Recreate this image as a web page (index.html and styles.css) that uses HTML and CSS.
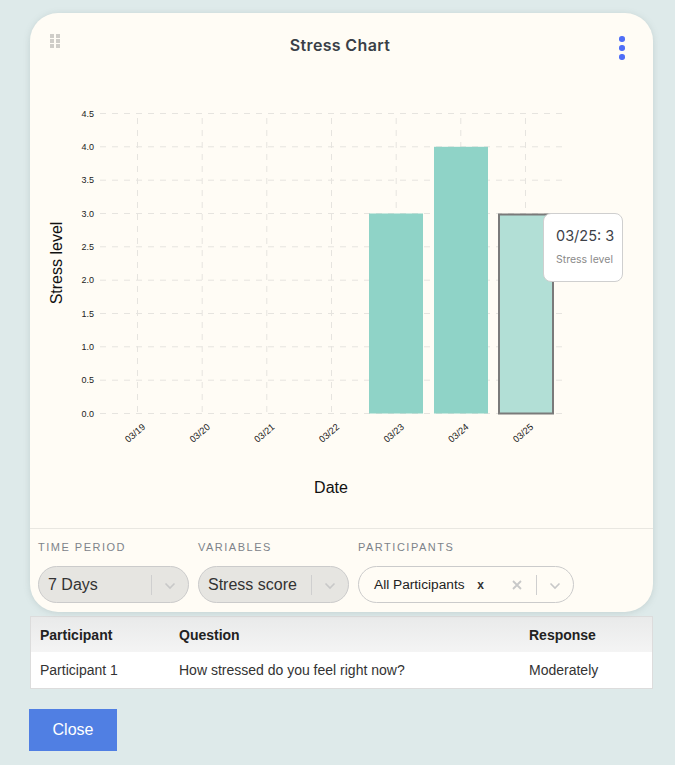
FILE: index.html
```html
<!DOCTYPE html>
<html>
<head>
<meta charset="utf-8">
<link rel="stylesheet" href="styles.css">
</head>
<body>
<div class="page">
  <div class="card">
    <div class="card-header">
      <div class="side left">
        <div class="drag">
          <span></span><span></span><span></span><span></span><span></span><span></span>
        </div>
      </div>
      <div class="title">Stress Chart</div>
      <div class="side right">
        <div class="kebab"><span></span><span></span><span></span></div>
      </div>
    </div>
    <svg class="chart" width="623" height="453" viewBox="0 0 623 453" xmlns="http://www.w3.org/2000/svg">
      <g stroke="#e6e4df" stroke-width="1" stroke-dasharray="6 6" fill="none">
        <line x1="70" y1="38.5" x2="532" y2="38.5"/>
        <line x1="70" y1="71.8" x2="532" y2="71.8"/>
        <line x1="70" y1="105.2" x2="532" y2="105.2"/>
        <line x1="70" y1="138.5" x2="532" y2="138.5"/>
        <line x1="70" y1="171.8" x2="532" y2="171.8"/>
        <line x1="70" y1="205.2" x2="532" y2="205.2"/>
        <line x1="70" y1="238.5" x2="532" y2="238.5"/>
        <line x1="70" y1="271.8" x2="532" y2="271.8"/>
        <line x1="70" y1="305.2" x2="532" y2="305.2"/>
        <line x1="70" y1="338.5" x2="532" y2="338.5"/>
        <line x1="107.5" y1="43" x2="107.5" y2="338"/>
        <line x1="172.2" y1="43" x2="172.2" y2="338"/>
        <line x1="236.8" y1="43" x2="236.8" y2="338"/>
        <line x1="301.5" y1="43" x2="301.5" y2="338"/>
        <line x1="366.2" y1="43" x2="366.2" y2="338"/>
        <line x1="430.8" y1="43" x2="430.8" y2="338"/>
        <line x1="495.5" y1="43" x2="495.5" y2="338"/>
      </g>
      <g font-family="Liberation Sans, Arial, sans-serif" font-size="9" fill="#222" text-anchor="end">
        <text x="64" y="41.5">4.5</text>
        <text x="64" y="74.8">4.0</text>
        <text x="64" y="108.2">3.5</text>
        <text x="64" y="141.5">3.0</text>
        <text x="64" y="174.8">2.5</text>
        <text x="64" y="208.2">2.0</text>
        <text x="64" y="241.5">1.5</text>
        <text x="64" y="274.8">1.0</text>
        <text x="64" y="308.2">0.5</text>
        <text x="64" y="341.5">0.0</text>
      </g>
      <rect x="339" y="138.5" width="54" height="200" fill="#8fd3c7"/>
      <rect x="404" y="71.8" width="54" height="266.7" fill="#8fd3c7"/>
      <rect x="469" y="139.5" width="54" height="199" fill="#b2dfd6" stroke="#7a7a7a" stroke-width="2"/>
      <g font-family="Liberation Sans, Arial, sans-serif" font-size="9.3" fill="#222" text-anchor="end">
        <text transform="translate(116 353) rotate(-40)">03/19</text>
        <text transform="translate(180.7 353) rotate(-40)">03/20</text>
        <text transform="translate(245.3 353) rotate(-40)">03/21</text>
        <text transform="translate(310 353) rotate(-40)">03/22</text>
        <text transform="translate(374.7 353) rotate(-40)">03/23</text>
        <text transform="translate(439.3 353) rotate(-40)">03/24</text>
        <text transform="translate(504 353) rotate(-40)">03/25</text>
      </g>
      <text x="301" y="418" font-family="Liberation Sans, Arial, sans-serif" font-size="16" fill="#111" text-anchor="middle">Date</text>
      <text transform="translate(32 188) rotate(-90)" font-family="Liberation Sans, Arial, sans-serif" font-size="16" fill="#111" text-anchor="middle">Stress level</text>
    </svg>
    <div class="tooltip">
      <div class="tt-value">03/25: 3</div>
      <div class="tt-label">Stress level</div>
    </div>
    <div class="filters">
      <div class="filter f-time">
        <div class="filter-label">TIME PERIOD</div>
        <div class="select grey">
          <span class="select-value">7 Days</span>
          <span class="sep"></span>
          <span class="chev"><svg width="12" height="8" viewBox="0 0 12 8"><path d="M1.5 1.5 L6 6 L10.5 1.5" fill="none" stroke="#c8c8c8" stroke-width="1.6"/></svg></span>
        </div>
      </div>
      <div class="filter f-var">
        <div class="filter-label">VARIABLES</div>
        <div class="select grey">
          <span class="select-value">Stress score</span>
          <span class="sep"></span>
          <span class="chev"><svg width="12" height="8" viewBox="0 0 12 8"><path d="M1.5 1.5 L6 6 L10.5 1.5" fill="none" stroke="#c8c8c8" stroke-width="1.6"/></svg></span>
        </div>
      </div>
      <div class="filter f-part">
        <div class="filter-label">PARTICIPANTS</div>
        <div class="select light">
          <span class="chip">All Participants <span class="chip-x">x</span></span>
          <span class="clear"><svg width="10" height="10" viewBox="0 0 10 10"><path d="M1 1 L9 9 M9 1 L1 9" fill="none" stroke="#c8c8c8" stroke-width="1.8"/></svg></span>
          <span class="sep"></span>
          <span class="chev"><svg width="12" height="8" viewBox="0 0 12 8"><path d="M1.5 1.5 L6 6 L10.5 1.5" fill="none" stroke="#c8c8c8" stroke-width="1.6"/></svg></span>
        </div>
      </div>
    </div>
  </div>
  <div class="table">
    <div class="row head">
      <div class="c1">Participant</div>
      <div class="c2">Question</div>
      <div class="c3">Response</div>
    </div>
    <div class="row body">
      <div class="c1">Participant 1</div>
      <div class="c2">How stressed do you feel right now?</div>
      <div class="c3">Moderately</div>
    </div>
  </div>
  <button class="close">Close</button>
</div>
</body>
</html>
```

FILE: styles.css
```css
* { box-sizing: border-box; }
html, body { margin: 0; padding: 0; }
body {
  background: #deeaea;
  width: 675px;
  height: 765px;
  overflow: hidden;
  font-family: "Liberation Sans", Arial, sans-serif;
}
.page {
  padding: 13px 22px 0 30px;
}
.card {
  position: relative;
  width: 623px;
  height: 599px;
  background: #fffcf5;
  border-radius: 28px;
  box-shadow: 0 1px 6px rgba(120, 140, 140, 0.25);
  display: flex;
  flex-direction: column;
}
.card-header {
  height: 62px;
  display: flex;
  align-items: flex-start;
  justify-content: space-between;
  padding: 21px 28px 0 20px;
}
.side { width: 40px; display: flex; }
.side.right { justify-content: flex-end; }
.drag {
  display: grid;
  grid-template-columns: 4px 4px;
  grid-auto-rows: 4px;
  gap: 1px 2px;
}
.drag span { background: #cfcdc8; display: block; }
.title {
  font-family: Inter, "Open Sans", sans-serif;
  font-weight: 600;
  font-size: 16px;
  letter-spacing: 0.35px;
  color: #3a3f47;
  margin-top: 1px;
  margin-left: 5px;
}
.kebab {
  display: flex;
  flex-direction: column;
  gap: 3.5px;
  margin-top: 2px;
}
.kebab span {
  width: 5.5px;
  height: 5.5px;
  border-radius: 50%;
  background: #4f6ef7;
  display: block;
}
.chart { display: block; flex: none; }
.tooltip {
  position: absolute;
  left: 513px;
  top: 200px;
  width: 80px;
  height: 69px;
  background: #fff;
  border: 1px solid #cfcfcf;
  border-radius: 8px;
  padding: 12px 0 0 12px;
  font-family: Inter, "Open Sans", sans-serif;
}
.tt-value { font-size: 14.5px; color: #3d4148; line-height: 20px; }
.tt-label { font-size: 10.5px; color: #8a8a8a; margin-top: 7px; line-height: 13px; }
.filters {
  border-top: 1px solid #e9e7e1;
  display: flex;
  gap: 9px;
  padding: 11px 0 0 8px;
}
.filter-label {
  font-size: 11px;
  letter-spacing: 1.5px;
  color: #7d838a;
  line-height: 14px;
  margin-bottom: 12px;
}
.f-time .select, .f-var .select { width: 151px; }
.f-part .select { width: 216px; }
.select {
  height: 37px;
  border-radius: 19px;
  border: 1px solid #cbcbcb;
  display: flex;
  align-items: center;
}
.select.grey { background: #e6e5e1; }
.select.light { background: #fffcf5; }
.select-value {
  flex: 1;
  padding-left: 9px;
  font-size: 16px;
  color: #333;
}
.sep {
  width: 1px;
  height: 20px;
  background: #cfcfcf;
}
.chev {
  width: 36px;
  display: flex;
  justify-content: center;
  align-items: center;
  padding-top: 2px;
}
.chip {
  flex: 1;
  padding-left: 15px;
  font-size: 13.7px;
  color: #222;
}
.chip-x { font-weight: bold; font-size: 12px; margin-left: 9px; color: #333; }
.clear {
  width: 38px;
  display: flex;
  justify-content: center;
  align-items: center;
}
.table {
  margin-top: 4px;
  width: 623px;
  border: 1px solid #dcdcdc;
  background: #fff;
}
.row {
  display: grid;
  grid-template-columns: 139px 350px 1fr;
  height: 36px;
  align-items: center;
  font-size: 14px;
  color: #333;
}
.row.head {
  background: linear-gradient(#e9eaea, #f4f4f4);
  font-weight: bold;
  color: #222;
  height: 35px;
}
.row > div { padding-left: 9px; }
.close {
  margin-top: 20px;
  margin-left: -1px;
  width: 88px;
  height: 42px;
  background: #507fe3;
  border: none;
  color: #fff;
  font-family: "Liberation Sans", Arial, sans-serif;
  font-size: 16px;
  padding: 0;
  display: block;
}
```
